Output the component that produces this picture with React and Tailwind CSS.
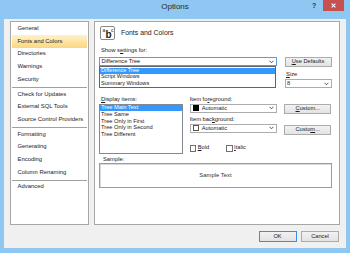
import React from "react";

const Chevron = () => (
  <svg width="5" height="4" viewBox="0 0 5 4" className="shrink-0">
    <path d="M0.6 0.8 L2.5 2.8 L4.4 0.8" fill="none" stroke="#444" strokeWidth="0.9" />
  </svg>
);

const U = ({ children }) => <span className="underline underline-offset-[0.5px]">{children}</span>;

const Btn = ({ children, className = "" }) => (
  <div
    className={
      "flex items-center justify-center border border-[#acacac] bg-linear-to-b from-[#f2f2f2] to-[#e3e3e3] text-[5.7px] text-[#1a1a1a] leading-none " +
      className
    }
  >
    {children}
  </div>
);

const leftItems = [
  "General",
  "Fonts and Colors",
  "Directories",
  "Warnings",
  "Security",
  "-",
  "Check for Updates",
  "External SQL Tools",
  "Source Control Providers",
  "-",
  "Formatting",
  "Generating",
  "Encoding",
  "Column Renaming",
  "-",
  "Advanced",
];

export default function App() {
  return (
    <div className="w-[350px] h-[253px] overflow-hidden bg-[#8fc7f3] flex flex-col font-['Liberation_Sans',Arial,sans-serif] text-[#1a1a1a]">
      {/* Title bar */}
      <div className="h-[19px] shrink-0 relative flex justify-center pt-[3px]">
        <span className="text-[8px] leading-[8px] text-[#2a2a2a]">Options</span>
        <span className="absolute left-[312px] top-[2px] text-[7px] leading-[8px] font-bold text-[#333]">?</span>
        <div className="absolute left-[323px] top-0 w-[21px] h-[11px] bg-[#c75050] flex items-center justify-center">
          <svg width="5" height="5" viewBox="0 0 5 5">
            <path d="M0.6 0.6 L4.4 4.4 M4.4 0.6 L0.6 4.4" stroke="#fff" strokeWidth="1.1" />
          </svg>
        </div>
      </div>

      {/* Client area */}
      <div className="flex-1 mx-[4px] mb-[5px] bg-[#f0f0f0] flex flex-col pt-[2px] px-[6px] pb-[6px]">
        <div className="flex h-[204px]">
          {/* Left nav */}
          <div className="w-[79px] h-full border border-[#a7a7a7] bg-white pt-[0.67px] flex flex-col">
            {leftItems.map((it, i) =>
              it === "-" ? (
                <div key={i} className="h-[2.2px] flex items-center px-[1px]">
                  <div className="h-px w-full bg-[#a0a0a0]" />
                </div>
              ) : (
                <div
                  key={i}
                  className={
                    "h-[12.67px] mx-[1px] pl-[5.5px] flex items-center text-[5.9px] leading-none " +
                    (it === "Fonts and Colors" ? "bg-linear-to-b from-[#fef2c9] to-[#fcd67c]" : "")
                  }
                >
                  {it}
                </div>
              )
            )}
          </div>

          {/* Right panel */}
          <div className="ml-[5px] w-[246px] h-full border border-[#a7a7a7] bg-white pl-[4px] pt-[4px] flex flex-col">
            {/* Header */}
            <div className="flex items-center">
              <div className="ml-[1px] w-[15px] h-[14px] border border-[#8a8a8a] rounded-[2px] bg-white relative">
                <span className="absolute left-[1.5px] top-[1px] text-[5px] leading-none">a</span>
                <span className="absolute left-[4.5px] top-[3px] text-[10px] leading-[10px] font-bold">b</span>
                <span className="absolute left-[10px] top-[1px] text-[5px] leading-none">c</span>
              </div>
              <span className="ml-[6px] text-[6.9px] leading-none">Fonts and Colors</span>
            </div>

            {/* Show settings for */}
            <div className="mt-[7px] flex">
              <div className="w-[178px]">
                <div className="h-[7px] leading-[7px] text-[5.8px] pl-[2px]">
                  Show s<U>e</U>ttings for:
                </div>
                <div className="mt-[3px] relative">
                  <div className="h-[9px] border border-[#569de5] bg-white flex items-center justify-between pl-[1.5px] pr-[2px] text-[5.7px] leading-none">
                    <span>Difference Tree</span>
                    <Chevron />
                  </div>
                  <div className="absolute left-0 right-[1px] top-full border border-[#646464] bg-white py-[0.7px] z-10">
                    <div className="h-[6.3px] bg-[#3399ff] text-white pl-[1px] flex items-center text-[5.6px] leading-none">
                      Difference Tree
                    </div>
                    <div className="h-[6.3px] pl-[1px] flex items-center text-[5.6px] leading-none">Script Windows</div>
                    <div className="h-[6.3px] pl-[1px] flex items-center text-[5.6px] leading-none">Summary Windows</div>
                  </div>
                </div>
              </div>
              <div className="ml-[7.5px] w-[47px] pt-[9.5px]">
                <Btn className="h-[10px]">
                  <span>
                    <U>U</U>se Defaults
                  </span>
                </Btn>
                <div className="mt-[4.3px] h-[7px] leading-[7px] text-[5.8px] pl-[1.5px]">
                  <U>S</U>ize
                </div>
                <div className="mt-[1.5px] h-[8.5px] border border-[#acacac] bg-white flex items-center justify-between pl-[1.5px] pr-[2px] text-[5.7px] leading-none">
                  <span>8</span>
                  <Chevron />
                </div>
              </div>
            </div>

            {/* Display items / colours */}
            <div className="mt-[8px] flex">
              <div className="w-[84px]">
                <div className="h-[7px] leading-[7px] text-[5.8px] pl-[2px]">
                  <U>D</U>isplay items:
                </div>
                <div className="mt-[1px] h-[50px] border border-[#828790] bg-white flex flex-col">
                  {["Tree Main Text", "Tree Same", "Tree Only in First", "Tree Only in Second", "Tree Different"].map(
                    (t, i) => (
                      <div
                        key={t}
                        className={
                          "h-[6.7px] pl-[1px] flex items-center text-[5.7px] leading-none " +
                          (i === 0 ? "bg-[#3399ff] text-white" : "")
                        }
                      >
                        {t}
                      </div>
                    )
                  )}
                </div>
              </div>

              <div className="ml-[6.7px] w-[87px]">
                <div className="h-[7px] leading-[7px] text-[5.8px]">
                  Item fo<U>r</U>eground:
                </div>
                <div className="mt-[1px] h-[9.4px] border border-[#acacac] bg-white flex items-center justify-between pl-[2px] pr-[2px] text-[5.7px] leading-none">
                  <div className="flex items-center">
                    <div className="w-[6px] h-[6px] bg-black" />
                    <span className="ml-[3px]">Automatic</span>
                  </div>
                  <Chevron />
                </div>
                <div className="mt-[3px] h-[7px] leading-[7px] text-[5.8px]">
                  Item bac<U>k</U>ground:
                </div>
                <div className="mt-[0.5px] h-[9.4px] border border-[#acacac] bg-white flex items-center justify-between pl-[2px] pr-[2px] text-[5.7px] leading-none">
                  <div className="flex items-center">
                    <div className="w-[6px] h-[6px] bg-white border border-[#555]" />
                    <span className="ml-[3px]">Automatic</span>
                  </div>
                  <Chevron />
                </div>
                <div className="mt-[12px] flex items-center text-[5.7px] leading-none">
                  <div className="w-[6.5px] h-[6.5px] border border-[#707070] bg-white" />
                  <span className="ml-[1.5px]">
                    <U>B</U>old
                  </span>
                  <div className="ml-[17px] w-[6.5px] h-[6.5px] border border-[#707070] bg-white" />
                  <span className="ml-[1.5px]">
                    <U>I</U>talic
                  </span>
                </div>
              </div>

              <div className="ml-[7.5px] w-[47px] pt-[8px]">
                <Btn className="h-[10.3px]">
                  <span>
                    <U>C</U>ustom...
                  </span>
                </Btn>
                <Btn className="mt-[11px] h-[10.3px]">
                  <span>
                    Custo<U>m</U>...
                  </span>
                </Btn>
              </div>
            </div>

            {/* Sample */}
            <div className="mt-[2px] ml-[4px] h-[7px] leading-[7px] text-[5.8px]">Sample:</div>
            <div className="mt-[0.5px] w-[233px] h-[24.4px] border border-[#9c9c9c] shadow-[inset_1px_1px_0_#d8d8d8] bg-white flex items-center justify-center text-[5.9px] leading-none text-[#333]">
              Sample Text
            </div>
          </div>
        </div>

        {/* Bottom buttons */}
        <div className="mt-[6px] flex justify-end pr-[1px]">
          <Btn className="w-[38px] h-[11px] !border-[#3c8fe0]">OK</Btn>
          <Btn className="ml-[4.5px] w-[38px] h-[11px]">Cancel</Btn>
        </div>
      </div>
    </div>
  );
}
